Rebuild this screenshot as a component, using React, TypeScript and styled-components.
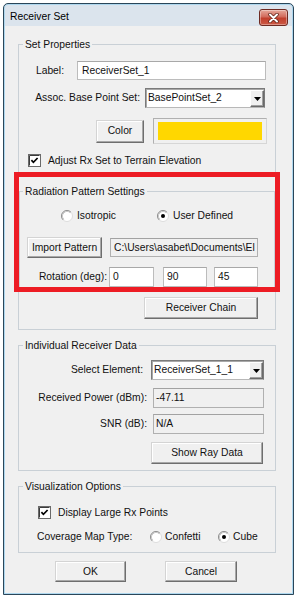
import React from "react";
import styled, { createGlobalStyle } from "styled-components";

const GlobalStyle = createGlobalStyle`
  html, body { margin: 0; padding: 0; background: #ffffff; }
  body {
    font-family: "Liberation Sans", Arial, sans-serif;
    font-size: 10.3px;
    line-height: 12px;
    color: #111;
  }
  *, *::before, *::after { box-sizing: border-box; }
`;

const Window = styled.div`
  position: relative;
  margin: 3px 0 0 3px;
  width: 291px;
  padding: 0 1px 1px;
  border: 1px solid #2a4659;
  border-radius: 5px 5px 0 0;
  background: #dbe4ed;
  box-shadow: inset 0 0 0 1px #aed7ee;
`;

const TitleBar = styled.div`
  display: flex;
  align-items: flex-start;
  height: 22px;
  padding-left: 5px;
`;

const Title = styled.div`
  margin-top: 7px;
  color: #000;
`;

const CloseButton = styled.div`
  margin: 5px 4px 0 auto;
  width: 29px;
  height: 17px;
  border: 1px solid #6e2a22;
  border-radius: 3px;
  background: linear-gradient(#e6a89b 0%, #d26b5c 45%, #c13f2d 55%, #cc5a45 100%);
  box-shadow: inset 0 0 0 1px rgba(255, 255, 255, 0.35);
  display: flex;
  align-items: center;
  justify-content: center;
`;

const Client = styled.div`
  background: #f0f0f0;
  padding: 12px 0 11px 13px;
`;

const Group = styled.fieldset<{ $w: number; $mt?: number; $pb: number }>`
  margin: ${(p) => p.$mt ?? 0}px 0 0 0;
  padding: 0 0 ${(p) => p.$pb}px 0;
  width: ${(p) => p.$w}px;
  border: 1px solid #c9d0d6;
  min-width: 0;
`;

const Legend = styled.legend<{ $ml: number }>`
  margin-left: ${(p) => p.$ml}px;
  padding: 0 2px;
  line-height: 13px;
  color: #111;
`;

const Row = styled.div<{ $mt: number; $h: number; $ml?: number }>`
  display: flex;
  align-items: center;
  margin-top: ${(p) => p.$mt}px;
  margin-left: ${(p) => p.$ml ?? 0}px;
  height: ${(p) => p.$h}px;
`;

const Label = styled.span<{ $w: number; $left?: boolean }>`
  flex: none;
  width: ${(p) => p.$w}px;
  text-align: ${(p) => (p.$left ? "left" : "right")};
  white-space: nowrap;
`;

const Text = styled.span<{ $ml?: number }>`
  margin-left: ${(p) => p.$ml ?? 0}px;
  white-space: nowrap;
`;

const TextBox = styled.div<{ $w: number; $h?: number; $ml?: number; $ro?: boolean; $pl?: number }>`
  flex: none;
  width: ${(p) => p.$w}px;
  height: ${(p) => p.$h ?? 20}px;
  margin-left: ${(p) => p.$ml ?? 0}px;
  padding-left: ${(p) => p.$pl ?? 3}px;
  display: flex;
  align-items: center;
  overflow: hidden;
  white-space: nowrap;
  background: ${(p) => (p.$ro ? "#f0f0f0" : "#ffffff")};
  border: 1px solid ${(p) => (p.$ro ? "#b0b0b0" : "#bcbcbc")};
  border-top-color: ${(p) => (p.$ro ? "#a2a2a2" : "#a8a8a8")};
`;

const Combo = styled.div<{ $w: number; $ml?: number }>`
  flex: none;
  width: ${(p) => p.$w}px;
  height: 20px;
  margin-left: ${(p) => p.$ml ?? 0}px;
  display: flex;
  align-items: stretch;
  background: #ffffff;
  border: 1px solid #7a7a7a;
  border-bottom-color: #b8b8b8;
  box-shadow: inset 1px 1px 0 #a8a8a8;
`;

const ComboText = styled.span`
  flex: 1;
  padding-left: 2px;
  display: flex;
  align-items: center;
  white-space: nowrap;
  overflow: hidden;
`;

const ComboArrow = styled.span`
  flex: none;
  width: 14px;
  margin: 1px 0 0 0;
  background: #f0f0f0;
  border: 1px solid;
  border-color: #ffffff #6a6a6a #6a6a6a #ffffff;
  box-shadow: inset -1px -1px 0 #a0a0a0;
  display: flex;
  align-items: center;
  justify-content: center;
`;

const Button = styled.button<{ $w: number; $h: number; $ml?: number }>`
  flex: none;
  width: ${(p) => p.$w}px;
  height: ${(p) => p.$h}px;
  margin-left: ${(p) => p.$ml ?? 0}px;
  padding: 0;
  font: inherit;
  color: #111;
  background: #f0f0f0;
  border: 1px solid;
  border-color: #d4d4d4 #6e6e6e #6e6e6e #d4d4d4;
  box-shadow: inset -1px -1px 0 #a8a8a8, inset 1px 1px 0 #ffffff;
  outline: none;
`;

const Swatch = styled.div<{ $w: number; $h: number; $ml?: number }>`
  flex: none;
  width: ${(p) => p.$w}px;
  height: ${(p) => p.$h}px;
  margin-left: ${(p) => p.$ml ?? 0}px;
  padding: 3px 4px;
  border: 1px solid #b0b0b0;
  border-right-color: #d6d6d6;
  border-bottom-color: #d6d6d6;
  background: #f0f0f0;
`;

const SwatchFill = styled.div<{ $color: string }>`
  width: 100%;
  height: 100%;
  background: ${(p) => p.$color};
`;

const RadioOption = styled.span<{ $w?: number; $gap: number }>`
  flex: none;
  display: flex;
  align-items: center;
  gap: ${(p) => p.$gap}px;
  width: ${(p) => (p.$w ? `${p.$w}px` : "auto")};
  white-space: nowrap;
`;

const Highlight = styled.div`
  position: absolute;
  left: 10px;
  top: 168px;
  width: 266px;
  height: 120px;
  border: 5px solid #ed1c24;
  pointer-events: none;
`;

const RadioIcon = ({ checked }: { checked?: boolean }) => (
  <svg width="12" height="12" viewBox="0 0 12 12" style={{ flex: "none" }}>
    <circle cx="6" cy="6" r="5.5" fill="#ffffff" stroke="#dcdcdc" />
    <path d="M2.11 9.89 A5.5 5.5 0 0 1 9.89 2.11" fill="none" stroke="#8c8c8c" />
    <path d="M2.82 9.18 A4.5 4.5 0 0 1 9.18 2.82" fill="none" stroke="#c8c8c8" />
    {checked && <circle cx="6" cy="6" r="2" fill="#000" />}
  </svg>
);

const CheckIcon = () => (
  <svg width="13" height="13" viewBox="0 0 13 13" style={{ flex: "none" }}>
    <rect x="0.5" y="0.5" width="12" height="12" fill="#ffffff" stroke="#6a6a6a" />
    <path d="M1.5 11.5 V1.5 H11.5" fill="none" stroke="#3c3c3c" />
    <path d="M3.4 6.2 L5.4 8.3 L9.6 4" fill="none" stroke="#000" strokeWidth="1.7" />
  </svg>
);

const ArrowIcon = () => (
  <svg width="7" height="4" viewBox="0 0 7 4">
    <path d="M0 0 H7 L3.5 4 Z" fill="#000" />
  </svg>
);

const CloseIcon = () => (
  <svg width="11" height="10" viewBox="0 0 11 10">
    <path d="M2 1.5 L9 8.5 M9 1.5 L2 8.5" stroke="#5a1c12" strokeWidth="3.4" strokeLinecap="round" />
    <path d="M2 1.5 L9 8.5 M9 1.5 L2 8.5" stroke="#ffffff" strokeWidth="2" strokeLinecap="round" />
  </svg>
);

export default function App() {
  return (
    <>
      <GlobalStyle />
      <Window>
        <TitleBar>
          <Title>Receiver Set</Title>
          <CloseButton>
            <CloseIcon />
          </CloseButton>
        </TitleBar>
        <Client>
          <Group $w={258} $pb={10}>
            <Legend $ml={4}>Set Properties</Legend>
            <Row $mt={10} $h={19}>
              <Label $w={45}>Label:</Label>
              <TextBox $w={189} $h={19} $ml={13} $pl={4}>
                ReceiverSet_1
              </TextBox>
            </Row>
            <Row $mt={8} $h={20}>
              <Label $w={121}>Assoc. Base Point Set:</Label>
              <Combo $w={120} $ml={5}>
                <ComboText>BasePointSet_2</ComboText>
                <ComboArrow>
                  <ArrowIcon />
                </ComboArrow>
              </Combo>
            </Row>
            <Row $mt={10} $h={26}>
              <Button $w={48} $h={23} $ml={77}>
                Color
              </Button>
              <Swatch $w={114} $h={26} $ml={9}>
                <SwatchFill $color="#ffd700" />
              </Swatch>
            </Row>
            <Row $mt={10} $h={13} $ml={9}>
              <CheckIcon />
              <Text $ml={7}>Adjust Rx Set to Terrain Elevation</Text>
            </Row>

            <Group $w={256} $mt={18} $pb={3}>
              <Legend $ml={3}>Radiation Pattern Settings</Legend>
              <Row $mt={11} $h={14} $ml={41}>
                <RadioOption $w={96} $gap={4}>
                  <RadioIcon />
                  Isotropic
                </RadioOption>
                <RadioOption $gap={4}>
                  <RadioIcon checked />
                  User Defined
                </RadioOption>
              </Row>
              <Row $mt={14} $h={21} $ml={7}>
                <Button $w={75} $h={21}>
                  Import Pattern
                </Button>
                <TextBox $w={148} $h={19} $ml={8} $ro>
                  C:\Users\asabet\Documents\El
                </TextBox>
              </Row>
              <Row $mt={9} $h={20}>
                <Label $w={87}>Rotation (deg):</Label>
                <TextBox $w={45} $ml={2}>0</TextBox>
                <TextBox $w={44} $ml={9}>90</TextBox>
                <TextBox $w={44} $ml={7}>45</TextBox>
              </Row>
            </Group>

            <Row $mt={6} $h={22}>
              <Button $w={114} $h={22} $ml={125}>
                Receiver Chain
              </Button>
            </Row>
          </Group>

          <Group $w={258} $mt={9} $pb={6}>
            <Legend $ml={4}>Individual Receiver Data</Legend>
            <Row $mt={8} $h={20}>
              <Label $w={124}>Select Element:</Label>
              <Combo $w={113} $ml={8}>
                <ComboText>ReceiverSet_1_1</ComboText>
                <ComboArrow>
                  <ArrowIcon />
                </ComboArrow>
              </Combo>
            </Row>
            <Row $mt={8} $h={20}>
              <Label $w={128}>Received Power (dBm):</Label>
              <TextBox $w={111} $ml={6} $ro $pl={2}>
                -47.11
              </TextBox>
            </Row>
            <Row $mt={6} $h={20}>
              <Label $w={128}>SNR (dB):</Label>
              <TextBox $w={111} $ml={6} $ro $pl={2}>
                N/A
              </TextBox>
            </Row>
            <Row $mt={8} $h={22}>
              <Button $w={112} $h={22} $ml={132}>
                Show Ray Data
              </Button>
            </Row>
          </Group>

          <Group $w={258} $mt={9} $pb={8}>
            <Legend $ml={4}>Visualization Options</Legend>
            <Row $mt={13} $h={13} $ml={19}>
              <CheckIcon />
              <Text $ml={7}>Display Large Rx Points</Text>
            </Row>
            <Row $mt={11} $h={14} $ml={18}>
              <Label $w={113} $left>
                Coverage Map Type:
              </Label>
              <RadioOption $w={68} $gap={3}>
                <RadioIcon />
                Confetti
              </RadioOption>
              <RadioOption $gap={3}>
                <RadioIcon checked />
                Cube
              </RadioOption>
            </Row>
          </Group>

          <Row $mt={8} $h={21}>
            <Button $w={71} $h={21} $ml={37}>
              OK
            </Button>
            <Button $w={72} $h={21} $ml={39}>
              Cancel
            </Button>
          </Row>
        </Client>
        <Highlight />
      </Window>
    </>
  );
}
